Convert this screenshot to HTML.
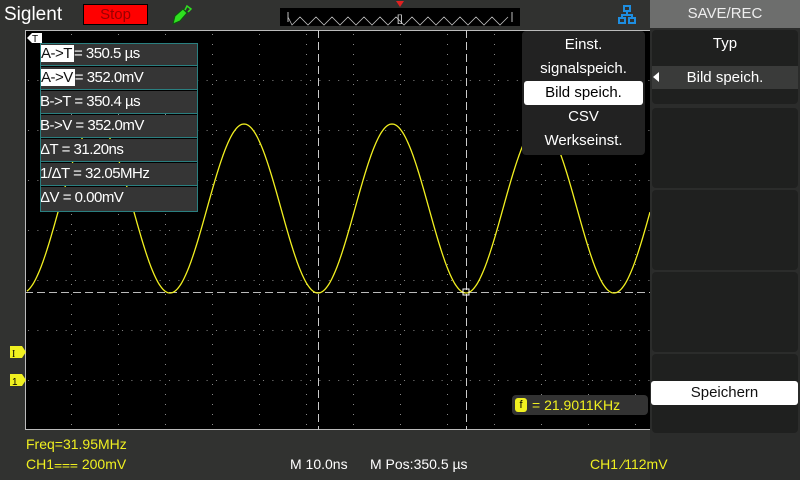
<!DOCTYPE html>
<html><head><meta charset="utf-8"><style>
body{margin:0;width:800px;height:480px;background:#313230;overflow:hidden;position:relative;font-family:"Liberation Sans",sans-serif}
.a{position:absolute}
.m{position:absolute;left:40px;width:158px;height:22px;background:#353535;border-bottom:1px solid #2a7f80;color:#fff;font-size:15px;line-height:22px;letter-spacing:-0.5px}
.m span.h{background:#fff;color:#111;padding:0 2px 0 1px}
.btn{position:absolute;left:652px;width:146px;background:#1f201f;border-radius:4px}
.ylw{color:#f0f020;font-size:14px;position:absolute}
</style></head><body>
<div class="a" style="left:4px;top:4px;color:#fff;font-size:19px">Siglent</div>
<div class="a" style="left:83px;top:4px;width:63px;height:19px;background:#f00;border:1px solid #000;color:#900;font-size:15px;line-height:19px;text-align:center">Stop</div>
<svg class="a" style="left:170px;top:4px" width="24" height="24" viewBox="0 0 24 24"><path d="M3 20 L5 12 L13 5 L17 9 L10 17 Z" fill="#2fe020" stroke="#0a5a0a"/><path d="M15 6 L17 2 L21 5 L18 8" fill="none" stroke="#2fe020" stroke-width="1.5"/></svg>
<div class="a" style="left:280px;top:8px;width:240px;height:18px;background:#000"></div>
<svg class="a" style="left:280px;top:8px" width="240" height="18"><path id="zz" fill="none" stroke="#bbb" stroke-width="0.8"/><text x="117" y="14" fill="#ddd" font-size="10">[]</text><path d="M8 4v10M232 4v10" stroke="#bbb"/></svg>
<svg class="a" style="left:395px;top:0" width="10" height="8"><path d="M1 1h8L5 7z" fill="#e02020"/></svg>
<svg class="a" style="left:617px;top:5px" width="20" height="20"><g fill="none" stroke="#1e8ee0" stroke-width="2"><rect x="7" y="1" width="6" height="5"/><rect x="2" y="13" width="6" height="5"/><rect x="12" y="13" width="6" height="5"/><path d="M10 6v4M5 13v-3h10v3"/></g></svg>
<svg class="a" style="left:0;top:0" width="650" height="480" id="sc">
<defs>
<pattern id="vd" x="24" y="30" width="47" height="10" patternUnits="userSpaceOnUse"><rect x="0" y="4" width="1" height="1" fill="#888"/></pattern>
<pattern id="hd" x="24" y="30" width="9.4" height="50" patternUnits="userSpaceOnUse"><rect x="4" y="0" width="1" height="1" fill="#888"/></pattern>
</defs>
<rect x="25" y="30" width="625" height="400" fill="#000"/>
<rect x="25" y="31" width="625" height="399" fill="url(#vd)"/>
<rect x="25" y="31" width="625" height="399" fill="url(#hd)"/>
<path d="M25 30.5H650M25 429.5H650M25.5 30V430" stroke="#bbb"/>
<path d="M318.5 30V430M466.5 30V430" stroke="#ccc" stroke-dasharray="8 4"/>
<path d="M25 292.5H650" stroke="#bbb" stroke-dasharray="8 4"/>
<path id="sn" fill="none" stroke="#f2f020" stroke-width="1.3"/>
<rect x="463" y="289" width="6" height="6" fill="none" stroke="#fff"/>
<path d="M10 346h12l4 6-4 6H10z" fill="#f0f020"/><text x="12" y="357" font-size="10" fill="#000" font-family="Liberation Serif">I</text>
<path d="M10 374h12l4 6-4 6H10z" fill="#f0f020"/><text x="12" y="385" font-size="10" fill="#000">1</text>
<path d="M27 38l5-5h10v10H32z" fill="#fff"/><text x="32" y="42" font-size="10" fill="#000">T</text>
</svg>
<div class="m" style="top:43px"><span class="h">A-&gt;T</span>= 350.5 µs</div>
<div class="m" style="top:67px"><span class="h">A-&gt;V</span>= 352.0mV</div>
<div class="m" style="top:91px">B-&gt;T = 350.4 µs</div>
<div class="m" style="top:115px">B-&gt;V = 352.0mV</div>
<div class="m" style="top:139px">ΔT = 31.20ns</div>
<div class="m" style="top:163px">1/ΔT = 32.05MHz</div>
<div class="m" style="top:187px;border-bottom:none;height:24px">ΔV = 0.00mV</div>
<div class="a" style="left:40px;top:43px;width:158px;height:169px;border:1px solid #2a7f80;box-sizing:border-box"></div>
<div class="a" style="left:522px;top:31px;width:123px;height:124px;background:#222;border-radius:4px;color:#fff;font-size:15px;text-align:center;line-height:24px">
<div style="margin-top:2px">Einst.</div><div>signalspeich.</div><div style="background:#fff;color:#000;margin:0 2px;border-radius:3px">Bild speich.</div><div>CSV</div><div>Werkseinst.</div></div>
<div class="a" style="left:512px;top:395px;width:136px;height:20px;background:#333;border-radius:4px"></div>
<div class="a" style="left:515px;top:398px;width:12px;height:14px;background:#f0f020;border-radius:3px;font-size:11px;text-align:center;line-height:14px">f</div>
<div class="ylw" style="left:532px;top:397px">= 21.9011KHz</div>
<div class="a" style="left:650px;top:0;width:150px;height:480px;background:#2b2c2b"></div>
<div class="a" style="left:650px;top:0;width:150px;height:28px;background:#6d6e6d;color:#eee;font-size:15px;text-align:center;line-height:28px">SAVE/REC</div>
<div class="btn" style="top:30px;height:74px"></div>
<div class="a" style="left:652px;top:30px;width:146px;height:28px;color:#fff;font-size:15px;text-align:center;line-height:28px">Typ</div>
<div class="a" style="left:652px;top:66px;width:146px;height:23px;background:#3a3b3a;color:#fff;font-size:15px;text-align:center;line-height:23px">Bild speich.</div>
<svg class="a" style="left:652px;top:71px" width="8" height="12"><path d="M7 1v10L1 6z" fill="#fff"/></svg>
<div class="btn" style="top:108px;height:80px"></div>
<div class="btn" style="top:190px;height:80px"></div>
<div class="btn" style="top:272px;height:80px"></div>
<div class="btn" style="top:354px;height:79px"></div>
<div class="a" style="left:651px;top:381px;width:147px;height:24px;background:#fff;border-radius:3px;color:#111;font-size:15px;text-align:center;line-height:24px">Speichern</div>
<div class="ylw" style="left:26px;top:436px">Freq=31.95MHz</div>
<div class="ylw" style="left:26px;top:456px">CH1⩶ 200mV</div>
<div class="a" style="left:290px;top:456px;color:#fff;font-size:14px">M 10.0ns</div>
<div class="a" style="left:370px;top:456px;color:#fff;font-size:14px">M Pos:350.5 µs</div>
<div class="ylw" style="left:590px;top:456px">CH1 ⁄112mV</div>
<script>
var d="";for(var x=27;x<=650;x+=1){var y=208.5+84.5*Math.cos((x-170)/148*2*Math.PI);d+=(x==27?"M":"L")+x+" "+y.toFixed(1);}
document.getElementById("sn").setAttribute("d",d);
var z="M8 9";for(var i=0;i<28;i++){z+="L"+(12+i*8)+" "+(i%2?9:17);}
document.getElementById("zz").setAttribute("d",z);
</script>
</body></html>
